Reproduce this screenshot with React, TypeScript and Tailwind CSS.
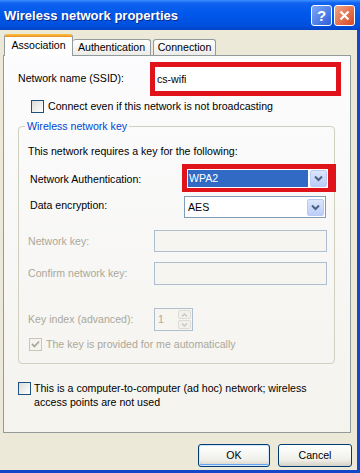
import React from 'react';

function Chevron() {
    return (
        <svg width="9" height="7" viewBox="0 0 9 7" className="block">
            <path d="M1 1.5 L4.5 5 L8 1.5" fill="none" stroke="#4D6185" strokeWidth="2" />
        </svg>
    );
}

function DropButton() {
    return (
        <div className="w-[17px] h-[17px] my-auto mr-[1px] rounded-[2px] border border-[#B9CBF3] bg-[linear-gradient(to_bottom,#DCE6FD,#BBCDF8)] flex items-center justify-center">
            <Chevron />
        </div>
    );
}

function CheckBox({ checked = false, disabled = false }: { checked?: boolean; disabled?: boolean }) {
    return (
        <div
            className={
                disabled
                    ? 'w-[13px] h-[13px] shrink-0 border border-[#C8C6B8] bg-[#F4F3EE] flex items-center justify-center'
                    : 'w-[13px] h-[13px] shrink-0 border border-[#1C5180] bg-[linear-gradient(135deg,#DCDCD7,#FFFFFF)] flex items-center justify-center'
            }
        >
            {checked && (
                <svg width="9" height="9" viewBox="0 0 9 9" className="block">
                    <path d="M1 4 L3.5 6.5 L8 1.5" fill="none" stroke={disabled ? '#ACA899' : '#21A121'} strokeWidth="1.8" />
                </svg>
            )}
        </div>
    );
}

export default function App() {
    return (
        <div className="w-[360px] h-[473px] flex flex-col overflow-hidden text-[10.6px] leading-[13px] text-black font-['Liberation_Sans',Arial,sans-serif]">
            {/* Title bar */}
            <div className="h-[30px] shrink-0 flex items-center pl-[4px] pr-[5px] bg-[linear-gradient(to_bottom,#3D8FFF_0%,#0F62EE_10%,#0058EA_45%,#0050DF_85%,#0043C4_100%)]">
                <span className="font-bold text-[13px] text-white [text-shadow:1px_1px_0_#0A2A8A]">Wireless network properties</span>
                <div className="ml-auto flex gap-[2px]">
                    <div className="w-[21px] h-[21px] rounded-[3px] border border-white bg-[linear-gradient(135deg,#7FA8F8,#2B5FDB)] flex items-center justify-center text-white font-bold text-[15px] leading-none">
                        ?
                    </div>
                    <div className="w-[21px] h-[21px] rounded-[3px] border border-white bg-[linear-gradient(135deg,#F0A587,#D8461E)] flex items-center justify-center">
                        <svg width="11" height="11" viewBox="0 0 11 11" className="block">
                            <path d="M1.5 1.5 L9.5 9.5 M9.5 1.5 L1.5 9.5" stroke="white" strokeWidth="2.2" />
                        </svg>
                    </div>
                </div>
            </div>

            {/* Dialog body */}
            <div className="flex-1 flex flex-col bg-[#ECE9D8] border-r-[3px] border-b-[3px] border-[#1646C8] pt-[4px] pl-[3px] pr-[5px]">
                {/* Tabs */}
                <div className="relative z-10 -mb-[1px] flex items-end h-[22px]">
                    <div className="ml-[1px] w-[69px] h-[22px] rounded-t-[3px] border-x border-[#919B9C] bg-white flex flex-col">
                        <div className="h-[3px] rounded-t-[2px] bg-[linear-gradient(to_bottom,#FFC83C,#E68B2C)]" />
                        <div className="flex-1 flex items-center justify-center pb-[2px]">Association</div>
                    </div>
                    <div className="mb-[1px] w-[78px] h-[16px] rounded-t-[3px] border-t border-r border-[#919B9C] bg-[linear-gradient(to_bottom,#FFFFFF,#ECEBE6)] flex items-center justify-center">
                        Authentication
                    </div>
                    <div className="mb-[1px] ml-[2px] w-[63px] h-[16px] rounded-t-[3px] border-t border-x border-[#919B9C] bg-[linear-gradient(to_bottom,#FFFFFF,#ECEBE6)] flex items-center justify-center">
                        Connection
                    </div>
                </div>

                {/* Tab panel */}
                <div className="mr-[1px] h-[378px] shrink-0 border border-[#919B9C] bg-[linear-gradient(to_bottom,#FCFCFE,#F4F3EE)] pl-[14px] flex flex-col">
                    {/* SSID */}
                    <div className="mt-[6px] flex items-center">
                        <div className="w-[132px] pb-[2px]">Network name (SSID):</div>
                        <div className="w-[191px] h-[34px] border-[5px] border-[#E0121A] bg-white flex items-center pl-[2px]">
                            cs-wifi
                        </div>
                    </div>

                    <div className="mt-[4px] flex items-center h-[13px] pl-[13px]">
                        <CheckBox />
                        <span className="ml-[4px]">Connect even if this network is not broadcasting</span>
                    </div>

                    {/* Wireless network key group */}
                    <fieldset className="mt-[7px] w-[317px] rounded-[4px] border border-[#D0D0BF]">
                        <legend className="ml-[6px] px-[2px] text-[#0046D5]">Wireless network key</legend>

                        <div className="mt-[12px] pl-[9px] h-[13px]">This network requires a key for the following:</div>

                        <div className="mt-[6px] flex items-center">
                            <div className="w-[163px] pl-[11px] pt-[3px]">Network Authentication:</div>
                            <div className="w-[154px] -mr-[2px] h-[28px] border-[5px] border-r-[8px] border-b-[4px] border-[#E0121A] flex">
                                <div className="flex-1 bg-white flex">
                                    <div className="flex-1 my-[1px] ml-[1px] bg-[#316AC5] text-white flex items-center pl-[1px]">WPA2</div>
                                    <div className="w-[2px]" />
                                    <DropButton />
                                </div>
                            </div>
                        </div>

                        <div className="mt-[4px] flex items-center">
                            <div className="w-[165px] pl-[11px] pb-[4px]">Data encryption:</div>
                            <div className="w-[142px] h-[22px] border border-[#7F9DB9] bg-white flex">
                                <div className="flex-1 flex items-center pl-[3px]">AES</div>
                                <DropButton />
                            </div>
                        </div>

                        <div className="mt-[12px] flex items-center text-[#ACA899]">
                            <div className="w-[135px] pl-[9px]">Network key:</div>
                            <div className="w-[173px] h-[22px] border border-[#B0BFD0] bg-[#F6F5F0]" />
                        </div>

                        <div className="mt-[10px] flex items-center text-[#ACA899]">
                            <div className="w-[135px] pl-[9px]">Confirm network key:</div>
                            <div className="w-[173px] h-[23px] border border-[#B0BFD0] bg-[#F6F5F0]" />
                        </div>

                        <div className="mt-[23px] flex items-center text-[#ACA899]">
                            <div className="w-[135px] pl-[9px]">Key index (advanced):</div>
                            <div className="w-[39px] h-[23px] border border-[#B0BFD0] bg-[#F6F5F0] flex">
                                <div className="flex-1 flex items-center pl-[3px]">1</div>
                                <div className="w-[15px] flex flex-col gap-[1px] p-[1px]">
                                    <div className="flex-1 rounded-[2px] border border-[#DDDCD4] bg-[#F2F1EC] flex items-center justify-center">
                                        <svg width="7" height="4" viewBox="0 0 7 4" className="block">
                                            <path d="M1 3.5 L3.5 1 L6 3.5" fill="none" stroke="#C9C7BA" strokeWidth="1.4" />
                                        </svg>
                                    </div>
                                    <div className="flex-1 rounded-[2px] border border-[#DDDCD4] bg-[#F2F1EC] flex items-center justify-center">
                                        <svg width="7" height="4" viewBox="0 0 7 4" className="block">
                                            <path d="M1 0.5 L3.5 3 L6 0.5" fill="none" stroke="#C9C7BA" strokeWidth="1.4" />
                                        </svg>
                                    </div>
                                </div>
                            </div>
                        </div>

                        <div className="mt-[7px] mb-[12px] flex items-center h-[13px] pl-[10px] text-[#ACA899]">
                            <CheckBox checked disabled />
                            <span className="ml-[4px]">The key is provided for me automatically</span>
                        </div>
                    </fieldset>

                    <div className="mt-[17px] flex items-start">
                        <div className="mt-[1px]">
                            <CheckBox />
                        </div>
                        <div className="ml-[3px] leading-[14px]">
                            This is a computer-to-computer (ad hoc) network; wireless
                            <br />
                            access points are not used
                        </div>
                    </div>
                </div>

                {/* Buttons */}
                <div className="mt-[11px] flex justify-end gap-[8px]">
                    <div className="w-[72px] h-[23px] rounded-[3px] border border-[#003C74] bg-[linear-gradient(to_bottom,#FFFFFF,#F0F0EA_70%,#D6D0C5)] shadow-[inset_0_0_0_1px_#CEE7FF,inset_0_-1px_0_1px_#69A0EC] flex items-center justify-center">
                        OK
                    </div>
                    <div className="w-[74px] h-[23px] rounded-[3px] border border-[#003C74] bg-[linear-gradient(to_bottom,#FFFFFF,#F0F0EA_70%,#D6D0C5)] flex items-center justify-center">
                        Cancel
                    </div>
                </div>
            </div>
        </div>
    );
}
